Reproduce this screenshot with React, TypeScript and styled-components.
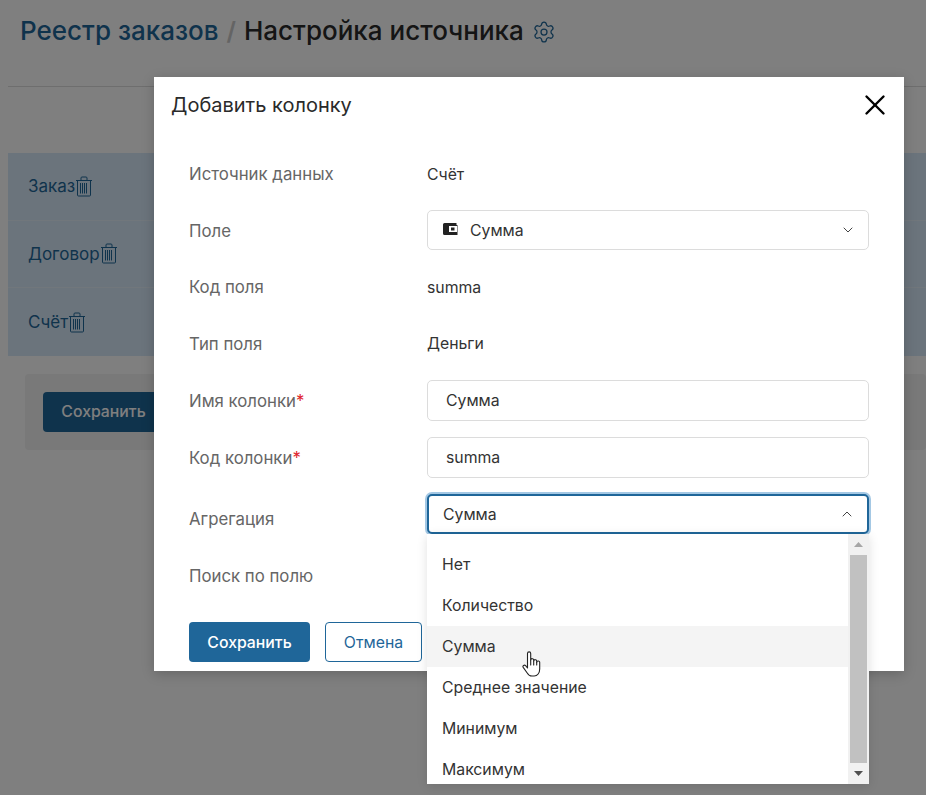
import React from "react";
import styled, { createGlobalStyle } from "styled-components";
import { ChevronDown, ChevronUp, Settings, X } from "lucide-react";

const Global = createGlobalStyle`
  html, body { margin: 0; padding: 0; background: #fff; height: 100%; overflow: hidden; }
  #root { height: 100%; }
  * { box-sizing: border-box; }
  body { font-family: Inter, Roboto, sans-serif; color: #333; }
`;

const Page = styled.div`
  position: relative;
  width: 926px;
  height: 795px;
  overflow: hidden;
  padding-left: 8px;
`;
const Header = styled.header`
  height: 87px;
  padding: 12px 0 0 12px;
  display: flex;
  align-items: flex-start;
  gap: 8px;
  border-bottom: 1px solid #ddd;
`;
const Crumb = styled.h1<{ $link?: boolean }>`
  margin: 0;
  font-size: 26px;
  line-height: 38px;
  font-weight: 500;
  color: ${(p) => (p.$link ? "#1f6699" : "#2a2a2a")};
`;
const Slash = styled.span`
  font-size: 25px;
  line-height: 38px;
  font-weight: 600;
  color: #c8c8c8;
`;
const GearWrap = styled.span`
  color: #1f6699;
  display: flex;
  margin: 8px 0 0 0;
`;
const Rows = styled.div`
  margin-top: 66px;
  background: #d6e9f8;
`;
const SourceRow = styled.div`
  height: 67.67px;
  display: flex;
  align-items: center;
  padding-left: 20px;
  border-bottom: 1px solid #e2eef8;
  color: #1f6699;
  font-size: 17px;
  &:last-child { border-bottom: 0; }
`;
const SavePanel = styled.div`
  margin: 18px 0 0 17px;
  height: 76px;
  border-radius: 4px;
  background: #f2f2f2;
  padding: 18px;
`;
const BaseButton = styled.button`
  height: 40px;
  border-radius: 4px;
  font-family: inherit;
  font-size: 15.8px;
  font-weight: 500;
  padding: 0;
  cursor: pointer;
`;
const Primary = styled(BaseButton)<{ $w: number }>`
  width: ${(p) => p.$w}px;
  background: #1f6699;
  color: #fff;
  border: 0;
`;
const Secondary = styled(BaseButton)`
  width: 97px;
  background: #fff;
  color: #1f6699;
  border: 1px solid #1f6699;
  font-weight: 400;
`;
const Overlay = styled.div`
  position: absolute;
  inset: 0;
  background: rgba(0, 0, 0, 0.5);
`;
const Modal = styled.div`
  position: absolute;
  left: 154px;
  top: 77px;
  width: 750px;
  height: 594px;
  background: #fff;
  box-shadow: 0 3px 12px rgba(0, 0, 0, 0.2);
`;
const ModalHead = styled.div`
  height: 77px;
  padding: 14px 12px 0 17px;
  display: flex;
  justify-content: space-between;
  align-items: flex-start;
`;
const ModalTitle = styled.h2`
  margin: 0;
  font-size: 20px;
  line-height: 28px;
  font-weight: 400;
  color: #2a2a2a;
`;
const Close = styled.span`
  display: flex;
  color: #000;
  margin-top: -3px;
`;
const Form = styled.div`
  padding: 0 35px;
  display: grid;
  grid-template-columns: 238px 442px;
  grid-template-rows: 40px 41px 40px 41px 41px 41px 40px 52px;
  row-gap: 16px;
`;
const Label = styled.div<{ $down?: number }>`
  display: flex;
  align-items: center;
  padding-top: ${(p) => p.$down ?? 0}px;
  font-size: 16.8px;
  color: #666;
`;
const Star = styled.span`
  color: #e0262e;
`;
const Value = styled.div`
  display: flex;
  align-items: center;
  font-size: 15.8px;
  color: #333;
`;
const Control = styled.div`
  height: 41px;
  display: flex;
  align-items: center;
  padding: 0 18px;
  font-size: 15.8px;
  color: #333;
  background: #fff;
  border-radius: 5px;
  border: 1px solid #dcdcdc;
`;
const SelectBox = styled(Control)<{ $focus?: boolean }>`
  height: 40px;
  justify-content: space-between;
  padding: 0 12px 0 15px;
  ${(p) =>
    p.$focus
      ? `border: 2px solid #1f6699; box-shadow: 0 0 0 2px #a4c8e4; padding-left: 14px;`
      : ""}
`;
const SelectValue = styled.span`
  display: flex;
  align-items: center;
  gap: 12px;
`;
const WalletWrap = styled.span`
  display: flex;
  margin-top: -3px;
`;
const Chevron = styled.span`
  display: flex;
  color: #444;
`;
const Actions = styled.div`
  padding: 20px 35px 0;
  display: flex;
  gap: 15px;
`;
const Menu = styled.div`
  position: absolute;
  left: 427px;
  top: 534px;
  width: 442px;
  height: 250px;
  background: #fff;
  display: flex;
  overflow: hidden;
  box-shadow: 0 2px 10px rgba(0, 0, 0, 0.12);
`;
const MenuList = styled.div`
  flex: 1;
  padding-top: 9.5px;
`;
const MenuItem = styled.div<{ $hover?: boolean }>`
  height: 41px;
  display: flex;
  align-items: center;
  padding-left: 15px;
  font-size: 15.8px;
  color: #333;
  background: ${(p) => (p.$hover ? "#f4f4f4" : "transparent")};
`;
const Track = styled.div`
  width: 21px;
  background: #f1f1f1;
  display: flex;
  flex-direction: column;
  align-items: center;
`;
const ArrowCell = styled.div`
  height: 21px;
  display: flex;
  align-items: center;
  justify-content: center;
`;
const Thumb = styled.div`
  width: 17px;
  flex: 1;
  background: #c1c1c1;
`;
const Cursor = styled.span`
  position: absolute;
  left: 522px;
  top: 651px;
  display: flex;
`;

const Trash = () => (
  <svg width="18" height="21" viewBox="0 0 18 21" fill="none" stroke="#1f6699" strokeWidth="1">
    <path d="M1 4.5h16M6 4.5V2a1 1 0 0 1 1-1h4a1 1 0 0 1 1 1v2.5M2.5 4.5V19a1 1 0 0 0 1 1h11a1 1 0 0 0 1-1V4.5M5.5 7v10.5M7.5 7v10.5M9.5 7v10.5M11.5 7v10.5" />
  </svg>
);

const Wallet = () => (
  <svg width="15" height="12" viewBox="0 0 15 12">
    <path
      fill="#222"
      fillRule="evenodd"
      d="M1.5 0h12v2H14.5v10h-13A1.5 1.5 0 0 1 0 10.5v-9A1.5 1.5 0 0 1 1.5 0zM6 3v6h8V3zm2 1.5h3.5v3H8z"
    />
  </svg>
);

const Hand = () => (
  <svg width="19" height="26" viewBox="0 0 19 26" fill="#fff" stroke="#222" strokeWidth="1.1" strokeLinejoin="round" strokeLinecap="round">
    <path d="M5.5 15V2.5a1.6 1.6 0 0 1 3.2 0V9a1.5 1.5 0 0 1 3 .4V10a1.5 1.5 0 0 1 3 .4v1a1.5 1.5 0 0 1 3 .3V18c0 4-2.3 7-5.5 7H10c-2.2 0-3.6-1-4.6-2.8L1.2 16.4c-1-1.6 1.2-3 2.4-1.7L5.5 17z" />
    <path d="M8.7 9v5M11.7 10v4M14.7 11.4V14" fill="none" />
  </svg>
);

const SmallUp = () => (
  <svg width="9" height="5" viewBox="0 0 9 5"><path d="M4.5 0 9 5H0z" fill="#a6a6a6" /></svg>
);
const SmallDown = () => (
  <svg width="9" height="5" viewBox="0 0 9 5"><path d="M4.5 5 0 0h9z" fill="#505050" /></svg>
);

export default function App() {
  return (
    <Page>
      <Global />
      <Header>
        <Crumb $link>Реестр заказов</Crumb>
        <Slash>/</Slash>
        <Crumb>Настройка источника</Crumb>
        <GearWrap><Settings size={24} strokeWidth={1.25} /></GearWrap>
      </Header>
      <Rows>
        <SourceRow>Заказ<Trash /></SourceRow>
        <SourceRow>Договор<Trash /></SourceRow>
        <SourceRow>Счёт<Trash /></SourceRow>
      </Rows>
      <SavePanel><Primary $w={121}>Сохранить</Primary></SavePanel>
      <Overlay />
      <Modal>
        <ModalHead>
          <ModalTitle>Добавить колонку</ModalTitle>
          <Close><X size={34} strokeWidth={1.7} /></Close>
        </ModalHead>
        <Form>
          <Label>Источник данных</Label>
          <Value>Счёт</Value>
          <Label>Поле</Label>
          <SelectBox>
            <SelectValue><WalletWrap><Wallet /></WalletWrap>Сумма</SelectValue>
            <Chevron><ChevronDown size={16} strokeWidth={1.5} /></Chevron>
          </SelectBox>
          <Label>Код поля</Label>
          <Value>summa</Value>
          <Label>Тип поля</Label>
          <Value>Деньги</Value>
          <Label>Имя колонки<Star>*</Star></Label>
          <Control>Сумма</Control>
          <Label>Код колонки<Star>*</Star></Label>
          <Control>summa</Control>
          <Label $down={10}>Агрегация</Label>
          <SelectBox $focus>
            <span>Сумма</span>
            <Chevron><ChevronUp size={16} strokeWidth={1.5} /></Chevron>
          </SelectBox>
          <Label>Поиск по полю</Label>
          <div />
        </Form>
        <Actions>
          <Primary $w={121}>Сохранить</Primary>
          <Secondary>Отмена</Secondary>
        </Actions>
      </Modal>
      <Menu>
        <MenuList>
          <MenuItem>Нет</MenuItem>
          <MenuItem>Количество</MenuItem>
          <MenuItem $hover>Сумма</MenuItem>
          <MenuItem>Среднее значение</MenuItem>
          <MenuItem>Минимум</MenuItem>
          <MenuItem>Максимум</MenuItem>
        </MenuList>
        <Track>
          <ArrowCell><SmallUp /></ArrowCell>
          <Thumb />
          <ArrowCell><SmallDown /></ArrowCell>
        </Track>
      </Menu>
      <Cursor><Hand /></Cursor>
    </Page>
  );
}
